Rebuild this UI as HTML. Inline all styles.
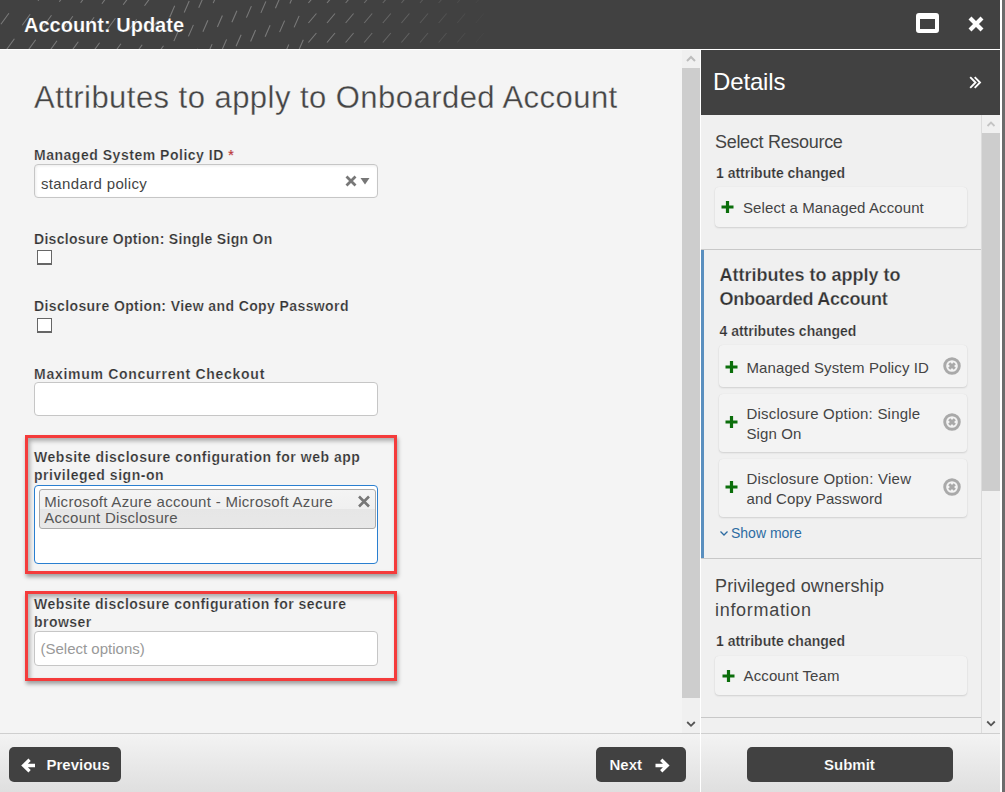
<!DOCTYPE html>
<html><head><meta charset="utf-8"><title>Account: Update</title>
<style>
*{box-sizing:border-box;margin:0;padding:0}
html,body{width:1005px;height:792px;overflow:hidden;background:#f4f4f4;font-family:"Liberation Sans",sans-serif;position:relative}
.a{position:absolute}
.t{position:absolute;white-space:nowrap;font-family:"Liberation Sans",sans-serif}
</style></head><body>
<div class="a" style="left:0px;top:0px;width:1000px;height:49px;background:#414141"></div>
<svg class="a" style="left:0;top:0" width="1000" height="49"><line x1="-4.6" y1="-1.2" x2="3.4" y2="-12.2" stroke="#8c8c8c" stroke-opacity="0.75" stroke-width="1.1"/><line x1="16.7" y1="-0.2" x2="24.7" y2="-11.2" stroke="#8c8c8c" stroke-opacity="0.75" stroke-width="1.1"/><line x1="38.0" y1="0.8" x2="46.0" y2="-10.2" stroke="#8c8c8c" stroke-opacity="0.75" stroke-width="1.1"/><line x1="59.3" y1="1.8" x2="67.3" y2="-9.2" stroke="#8c8c8c" stroke-opacity="0.75" stroke-width="1.1"/><line x1="80.6" y1="2.8" x2="88.6" y2="-8.2" stroke="#8c8c8c" stroke-opacity="0.75" stroke-width="1.1"/><line x1="101.9" y1="3.8" x2="109.9" y2="-7.2" stroke="#8c8c8c" stroke-opacity="0.75" stroke-width="1.1"/><line x1="123.2" y1="4.8" x2="131.2" y2="-6.2" stroke="#8c8c8c" stroke-opacity="0.75" stroke-width="1.1"/><line x1="144.5" y1="5.8" x2="152.5" y2="-5.2" stroke="#8c8c8c" stroke-opacity="0.75" stroke-width="1.1"/><line x1="0.9" y1="24.3" x2="8.9" y2="13.3" stroke="#8c8c8c" stroke-opacity="0.75" stroke-width="1.1"/><line x1="22.2" y1="25.3" x2="30.2" y2="14.3" stroke="#8c8c8c" stroke-opacity="0.75" stroke-width="1.1"/><line x1="43.5" y1="26.3" x2="51.5" y2="15.3" stroke="#8c8c8c" stroke-opacity="0.75" stroke-width="1.1"/><line x1="64.8" y1="27.3" x2="72.8" y2="16.3" stroke="#8c8c8c" stroke-opacity="0.75" stroke-width="1.1"/><line x1="86.1" y1="28.3" x2="94.1" y2="17.3" stroke="#8c8c8c" stroke-opacity="0.75" stroke-width="1.1"/><line x1="107.4" y1="29.3" x2="115.4" y2="18.3" stroke="#8c8c8c" stroke-opacity="0.75" stroke-width="1.1"/><line x1="128.7" y1="30.3" x2="136.7" y2="19.3" stroke="#8c8c8c" stroke-opacity="0.75" stroke-width="1.1"/><line x1="150.0" y1="31.3" x2="158.0" y2="20.3" stroke="#8c8c8c" stroke-opacity="0.75" stroke-width="1.1"/><line x1="-14.9" y1="48.8" x2="-6.9" y2="37.8" stroke="#8c8c8c" stroke-opacity="0.75" stroke-width="1.1"/><line x1="6.4" y1="49.8" x2="14.4" y2="38.8" stroke="#8c8c8c" stroke-opacity="0.75" stroke-width="1.1"/><line x1="27.7" y1="50.8" x2="35.7" y2="39.8" stroke="#8c8c8c" stroke-opacity="0.75" stroke-width="1.1"/><line x1="49.0" y1="51.8" x2="57.0" y2="40.8" stroke="#8c8c8c" stroke-opacity="0.75" stroke-width="1.1"/><line x1="70.3" y1="52.8" x2="78.3" y2="41.8" stroke="#8c8c8c" stroke-opacity="0.75" stroke-width="1.1"/><line x1="91.6" y1="53.8" x2="99.6" y2="42.8" stroke="#8c8c8c" stroke-opacity="0.75" stroke-width="1.1"/><line x1="112.9" y1="54.8" x2="120.9" y2="43.8" stroke="#8c8c8c" stroke-opacity="0.75" stroke-width="1.1"/><line x1="134.2" y1="55.8" x2="142.2" y2="44.8" stroke="#8c8c8c" stroke-opacity="0.75" stroke-width="1.1"/><line x1="155.5" y1="56.8" x2="163.5" y2="45.8" stroke="#8c8c8c" stroke-opacity="0.75" stroke-width="1.1"/><line x1="165.5" y1="-6.7" x2="170.5" y2="-18.2" stroke="#8c8c8c" stroke-opacity="0.75" stroke-width="1.1"/><line x1="180.0" y1="-11.4" x2="185.0" y2="-22.9" stroke="#8c8c8c" stroke-opacity="0.75" stroke-width="1.1"/><line x1="169.7" y1="17.2" x2="174.7" y2="5.7" stroke="#8c8c8c" stroke-opacity="0.75" stroke-width="1.1"/><line x1="184.2" y1="12.5" x2="189.2" y2="1.0" stroke="#8c8c8c" stroke-opacity="0.75" stroke-width="1.1"/><line x1="198.7" y1="7.8" x2="203.7" y2="-3.7" stroke="#8c8c8c" stroke-opacity="0.75" stroke-width="1.1"/><line x1="213.2" y1="3.1" x2="218.2" y2="-8.4" stroke="#8c8c8c" stroke-opacity="0.75" stroke-width="1.1"/><line x1="227.7" y1="-1.6" x2="232.7" y2="-13.1" stroke="#8c8c8c" stroke-opacity="0.75" stroke-width="1.1"/><line x1="242.2" y1="-6.3" x2="247.2" y2="-17.8" stroke="#8c8c8c" stroke-opacity="0.75" stroke-width="1.1"/><line x1="256.7" y1="-11.0" x2="261.7" y2="-22.5" stroke="#8c8c8c" stroke-opacity="0.75" stroke-width="1.1"/><line x1="173.9" y1="41.1" x2="178.9" y2="29.6" stroke="#8c8c8c" stroke-opacity="0.75" stroke-width="1.1"/><line x1="188.4" y1="36.4" x2="193.4" y2="24.9" stroke="#8c8c8c" stroke-opacity="0.75" stroke-width="1.1"/><line x1="202.9" y1="31.7" x2="207.9" y2="20.2" stroke="#8c8c8c" stroke-opacity="0.75" stroke-width="1.1"/><line x1="217.4" y1="27.0" x2="222.4" y2="15.5" stroke="#8c8c8c" stroke-opacity="0.75" stroke-width="1.1"/><line x1="231.9" y1="22.3" x2="236.9" y2="10.8" stroke="#8c8c8c" stroke-opacity="0.75" stroke-width="1.1"/><line x1="246.4" y1="17.6" x2="251.4" y2="6.1" stroke="#8c8c8c" stroke-opacity="0.75" stroke-width="1.1"/><line x1="260.9" y1="12.9" x2="265.9" y2="1.4" stroke="#8c8c8c" stroke-opacity="0.75" stroke-width="1.1"/><line x1="275.4" y1="8.2" x2="280.4" y2="-3.3" stroke="#8c8c8c" stroke-opacity="0.75" stroke-width="1.1"/><line x1="289.9" y1="3.5" x2="294.9" y2="-8.0" stroke="#8c8c8c" stroke-opacity="0.75" stroke-width="1.1"/><line x1="192.6" y1="60.3" x2="197.6" y2="48.8" stroke="#8c8c8c" stroke-opacity="0.75" stroke-width="1.1"/><line x1="207.1" y1="55.6" x2="212.1" y2="44.1" stroke="#8c8c8c" stroke-opacity="0.75" stroke-width="1.1"/><line x1="221.6" y1="50.9" x2="226.6" y2="39.4" stroke="#8c8c8c" stroke-opacity="0.75" stroke-width="1.1"/><line x1="236.1" y1="46.2" x2="241.1" y2="34.7" stroke="#8c8c8c" stroke-opacity="0.75" stroke-width="1.1"/><line x1="250.6" y1="41.5" x2="255.6" y2="30.0" stroke="#8c8c8c" stroke-opacity="0.75" stroke-width="1.1"/><line x1="265.1" y1="36.8" x2="270.1" y2="25.3" stroke="#8c8c8c" stroke-opacity="0.75" stroke-width="1.1"/><line x1="279.6" y1="32.1" x2="284.6" y2="20.6" stroke="#8c8c8c" stroke-opacity="0.75" stroke-width="1.1"/><line x1="294.1" y1="27.4" x2="299.1" y2="15.9" stroke="#8c8c8c" stroke-opacity="0.75" stroke-width="1.1"/><line x1="269.3" y1="60.7" x2="274.3" y2="49.2" stroke="#8c8c8c" stroke-opacity="0.75" stroke-width="1.1"/><line x1="283.8" y1="56.0" x2="288.8" y2="44.5" stroke="#8c8c8c" stroke-opacity="0.75" stroke-width="1.1"/><line x1="298.3" y1="51.3" x2="303.3" y2="39.8" stroke="#8c8c8c" stroke-opacity="0.75" stroke-width="1.1"/><line x1="308.4" y1="3.0" x2="316.4" y2="-6.5" stroke="#8c8c8c" stroke-opacity="0.75" stroke-width="1.1"/><line x1="327.0" y1="3.0" x2="335.0" y2="-6.5" stroke="#8c8c8c" stroke-opacity="0.75" stroke-width="1.1"/><line x1="345.6" y1="3.0" x2="353.6" y2="-6.5" stroke="#8c8c8c" stroke-opacity="0.68" stroke-width="1.1"/><line x1="364.2" y1="3.0" x2="372.2" y2="-6.5" stroke="#8c8c8c" stroke-opacity="0.59" stroke-width="1.1"/><line x1="382.8" y1="3.0" x2="390.8" y2="-6.5" stroke="#8c8c8c" stroke-opacity="0.50" stroke-width="1.1"/><line x1="401.4" y1="3.0" x2="409.4" y2="-6.5" stroke="#8c8c8c" stroke-opacity="0.42" stroke-width="1.1"/><line x1="420.0" y1="3.0" x2="428.0" y2="-6.5" stroke="#8c8c8c" stroke-opacity="0.33" stroke-width="1.1"/><line x1="438.6" y1="3.0" x2="446.6" y2="-6.5" stroke="#8c8c8c" stroke-opacity="0.24" stroke-width="1.1"/><line x1="457.2" y1="3.0" x2="465.2" y2="-6.5" stroke="#8c8c8c" stroke-opacity="0.15" stroke-width="1.1"/><line x1="475.8" y1="3.0" x2="483.8" y2="-6.5" stroke="#8c8c8c" stroke-opacity="0.07" stroke-width="1.1"/><line x1="308.4" y1="23.0" x2="316.4" y2="13.5" stroke="#8c8c8c" stroke-opacity="0.75" stroke-width="1.1"/><line x1="327.0" y1="23.0" x2="335.0" y2="13.5" stroke="#8c8c8c" stroke-opacity="0.75" stroke-width="1.1"/><line x1="345.6" y1="23.0" x2="353.6" y2="13.5" stroke="#8c8c8c" stroke-opacity="0.68" stroke-width="1.1"/><line x1="364.2" y1="23.0" x2="372.2" y2="13.5" stroke="#8c8c8c" stroke-opacity="0.59" stroke-width="1.1"/><line x1="382.8" y1="23.0" x2="390.8" y2="13.5" stroke="#8c8c8c" stroke-opacity="0.50" stroke-width="1.1"/><line x1="401.4" y1="23.0" x2="409.4" y2="13.5" stroke="#8c8c8c" stroke-opacity="0.42" stroke-width="1.1"/><line x1="420.0" y1="23.0" x2="428.0" y2="13.5" stroke="#8c8c8c" stroke-opacity="0.33" stroke-width="1.1"/><line x1="438.6" y1="23.0" x2="446.6" y2="13.5" stroke="#8c8c8c" stroke-opacity="0.24" stroke-width="1.1"/><line x1="457.2" y1="23.0" x2="465.2" y2="13.5" stroke="#8c8c8c" stroke-opacity="0.15" stroke-width="1.1"/><line x1="475.8" y1="23.0" x2="483.8" y2="13.5" stroke="#8c8c8c" stroke-opacity="0.07" stroke-width="1.1"/><line x1="308.4" y1="42.5" x2="316.4" y2="33.0" stroke="#8c8c8c" stroke-opacity="0.75" stroke-width="1.1"/><line x1="327.0" y1="42.5" x2="335.0" y2="33.0" stroke="#8c8c8c" stroke-opacity="0.75" stroke-width="1.1"/><line x1="345.6" y1="42.5" x2="353.6" y2="33.0" stroke="#8c8c8c" stroke-opacity="0.68" stroke-width="1.1"/><line x1="364.2" y1="42.5" x2="372.2" y2="33.0" stroke="#8c8c8c" stroke-opacity="0.59" stroke-width="1.1"/><line x1="382.8" y1="42.5" x2="390.8" y2="33.0" stroke="#8c8c8c" stroke-opacity="0.50" stroke-width="1.1"/><line x1="401.4" y1="42.5" x2="409.4" y2="33.0" stroke="#8c8c8c" stroke-opacity="0.42" stroke-width="1.1"/><line x1="420.0" y1="42.5" x2="428.0" y2="33.0" stroke="#8c8c8c" stroke-opacity="0.33" stroke-width="1.1"/><line x1="438.6" y1="42.5" x2="446.6" y2="33.0" stroke="#8c8c8c" stroke-opacity="0.24" stroke-width="1.1"/><line x1="457.2" y1="42.5" x2="465.2" y2="33.0" stroke="#8c8c8c" stroke-opacity="0.15" stroke-width="1.1"/><line x1="475.8" y1="42.5" x2="483.8" y2="33.0" stroke="#8c8c8c" stroke-opacity="0.07" stroke-width="1.1"/></svg>
<div class="a" style="left:0px;top:49px;width:1001px;height:1px;background:#fff"></div>
<div class="a" style="left:1000px;top:0px;width:2px;height:792px;background:#fff"></div>
<div class="a" style="left:1002px;top:0px;width:3px;height:792px;background:#6c6c6c"></div>
<div class="t" style="left:24px;top:15.07px;font-size:20px;line-height:20px;font-weight:700;color:#fff;-webkit-text-stroke:0.2px #414141;">Account: Update</div>
<div class="a" style="left:916px;top:13px;width:23px;height:20px;border:solid #fff;border-width:6px 4px 4px 4px;border-radius:3px"></div>
<svg class="a" style="left:966px;top:14px" width="20" height="20" viewBox="0 0 20 20"><path d="M4 4 L16 16 M16 4 L4 16" stroke="#fff" stroke-width="4.2" stroke-linecap="butt"/></svg>
<div class="a" style="left:0px;top:50px;width:682px;height:683px;background:#f4f4f4"></div>
<div class="a" style="left:682px;top:50px;width:18px;height:683px;background:#f0f0f0"></div>
<div class="a" style="left:682px;top:68px;width:18px;height:630px;background:#cdcdcd"></div>
<svg class="a" style="left:682px;top:50px" width="18" height="18"><path d="M5 11 L9 7 L13 11" fill="none" stroke="#bdbdbd" stroke-width="2"/></svg>
<svg class="a" style="left:682px;top:715px" width="18" height="18"><path d="M5.2 7 L9 10.8 L12.8 7" fill="none" stroke="#555" stroke-width="1.8"/></svg>
<div class="a" style="left:700px;top:50px;width:1px;height:742px;background:#fff"></div>
<div class="t" style="left:34px;top:81.75px;font-size:31px;line-height:31px;font-weight:400;color:#444;letter-spacing:0.46px;-webkit-text-stroke:0.3px #f4f4f4;">Attributes to apply to Onboarded Account</div>
<div class="t" style="left:34px;top:148.15px;font-size:14px;line-height:14px;font-weight:700;color:#333;letter-spacing:0.52px;-webkit-text-stroke:0.2px #f4f4f4;">Managed System Policy ID <span style="color:#b83232">*</span></div>
<div class="a" style="left:34px;top:164px;width:344px;height:34px;background:#fff;border:1px solid #c6c6c6;border-radius:4px;box-shadow:inset 1px 1px 3px rgba(0,0,0,.08)"></div>
<div class="t" style="left:41px;top:175.60px;font-size:15px;line-height:15px;font-weight:400;color:#444;letter-spacing:0.35px;">standard policy</div>
<svg class="a" style="left:344px;top:174px" width="30" height="14"><path d="M2.5 2.5 L11.5 11.5 M11.5 2.5 L2.5 11.5" stroke="#777" stroke-width="2.8"/><path d="M16.5 4 L25.5 4 L21 10.5 Z" fill="#777"/></svg>
<div class="t" style="left:34px;top:232.15px;font-size:14px;line-height:14px;font-weight:700;color:#333;letter-spacing:0.3px;-webkit-text-stroke:0.2px #f4f4f4;">Disclosure Option: Single Sign On</div>
<div class="a" style="left:37px;top:250px;width:15px;height:15px;background:#fff;border:1px solid #666;border-bottom-width:2px"></div>
<div class="t" style="left:34px;top:299.15px;font-size:14px;line-height:14px;font-weight:700;color:#333;letter-spacing:0.4px;-webkit-text-stroke:0.2px #f4f4f4;">Disclosure Option: View and Copy Password</div>
<div class="a" style="left:37px;top:318px;width:15px;height:15px;background:#fff;border:1px solid #666;border-bottom-width:2px"></div>
<div class="t" style="left:34px;top:367.15px;font-size:14px;line-height:14px;font-weight:700;color:#333;letter-spacing:0.72px;-webkit-text-stroke:0.2px #f4f4f4;">Maximum Concurrent Checkout</div>
<div class="a" style="left:34px;top:382px;width:344px;height:34px;background:#fff;border:1px solid #c6c6c6;border-radius:4px"></div>
<div class="a" style="left:25px;top:435px;width:372px;height:139px;border:3px solid #f43b3b;box-shadow:1px 3px 4px rgba(0,0,0,.35), inset 2px 3px 4px rgba(0,0,0,.3)"></div>
<div class="t" style="left:34px;top:447.90px;font-size:14px;line-height:18.5px;font-weight:700;color:#333;letter-spacing:0.53px;-webkit-text-stroke:0.2px #f4f4f4;">Website disclosure configuration for web app<br>privileged sign-on</div>
<div class="a" style="left:34px;top:485px;width:344px;height:79px;background:#fff;border:1px solid #2a7fd0;border-radius:4px"></div>
<div class="a" style="left:39px;top:489px;width:337px;height:40px;background:linear-gradient(#f4f4f4,#f0f0f0 50%,#e6e6e6 50%,#e8e8e8);border:1px solid #aaa;border-radius:3px"></div>
<div class="t" style="left:44.2px;top:493.80px;font-size:15px;line-height:16px;font-weight:400;color:#555;letter-spacing:0.3px;">Microsoft Azure account - Microsoft Azure<br>Account Disclosure</div>
<svg class="a" style="left:357px;top:495px" width="14" height="13"><path d="M2 1.5 L12 11.5 M12 1.5 L2 11.5" stroke="#777" stroke-width="2.6"/></svg>
<div class="a" style="left:25px;top:591px;width:372px;height:90px;border:3px solid #f43b3b;box-shadow:1px 3px 4px rgba(0,0,0,.35), inset 2px 3px 4px rgba(0,0,0,.3)"></div>
<div class="t" style="left:34px;top:595.15px;font-size:14px;line-height:18px;font-weight:700;color:#333;letter-spacing:0.47px;-webkit-text-stroke:0.2px #f4f4f4;">Website disclosure configuration for secure<br>browser</div>
<div class="a" style="left:34px;top:631px;width:344px;height:35px;background:#fff;border:1px solid #c6c6c6;border-radius:4px"></div>
<div class="t" style="left:40.5px;top:641.00px;font-size:15px;line-height:15px;font-weight:400;color:#999;">(Select options)</div>
<div class="a" style="left:701px;top:50px;width:299px;height:65px;background:#414141"></div>
<div class="t" style="left:713px;top:70.48px;font-size:24px;line-height:24px;font-weight:400;color:#fff;letter-spacing:-0.15px;">Details</div>
<svg class="a" style="left:968px;top:75px" width="16" height="15"><path d="M2.2 2.2 L7.5 7.5 L2.2 12.8 M6.7 2.2 L12 7.5 L6.7 12.8" fill="none" stroke="#fff" stroke-width="1.9"/></svg>
<div class="a" style="left:701px;top:115px;width:280px;height:618px;background:#f0f0f0"></div>
<div class="a" style="left:981px;top:115px;width:19px;height:618px;background:#f0f0f0;border-left:1px solid #dcdcdc"></div>
<div class="a" style="left:982px;top:133px;width:18px;height:358px;background:#cdcdcd"></div>
<svg class="a" style="left:982px;top:115px" width="18" height="18"><path d="M5.5 11 L9 7.5 L12.5 11" fill="none" stroke="#c4c4c4" stroke-width="1.8"/></svg>
<svg class="a" style="left:982px;top:715px" width="18" height="18"><path d="M5.2 6.5 L9 10.3 L12.8 6.5" fill="none" stroke="#555" stroke-width="1.8"/></svg>
<div class="t" style="left:715px;top:132.96px;font-size:18px;line-height:18px;font-weight:400;color:#444;letter-spacing:-0.3px;">Select Resource</div>
<div class="t" style="left:716px;top:165.85px;font-size:14px;line-height:14px;font-weight:700;color:#333;-webkit-text-stroke:0.2px #f0f0f0;">1 attribute changed</div>
<div class="a" style="left:715px;top:187px;width:252px;height:40px;background:#f3f3f3;border-radius:4px;box-shadow:0 1px 2px rgba(0,0,0,.13), 0 0 1px rgba(0,0,0,.08)"></div>
<svg class="a" style="left:721px;top:201px" width="13" height="12"><path d="M6.5 0 V12 M0.5 6 H12.5" stroke="#0b6e0b" stroke-width="3.2"/></svg>
<div class="t" style="left:743px;top:200.00px;font-size:15px;line-height:15px;font-weight:400;color:#444;letter-spacing:0.1px;">Select a Managed Account</div>
<div class="a" style="left:701px;top:249px;width:280px;height:1px;background:#c8c8c8"></div>
<div class="a" style="left:701px;top:250px;width:3px;height:308px;background:#5a8fbf"></div>
<div class="t" style="left:719.5px;top:263.16px;font-size:18px;line-height:24px;font-weight:700;color:#333;-webkit-text-stroke:0.25px #f0f0f0;">Attributes to apply to<br><span style="letter-spacing:-0.25px">Onboarded Account</span></div>
<div class="t" style="left:719.5px;top:324.15px;font-size:14px;line-height:14px;font-weight:700;color:#333;-webkit-text-stroke:0.2px #f0f0f0;">4 attributes changed</div>
<div class="a" style="left:719px;top:345px;width:248px;height:42px;background:#f3f3f3;border-radius:4px;box-shadow:0 1px 2px rgba(0,0,0,.13), 0 0 1px rgba(0,0,0,.08)"></div>
<svg class="a" style="left:725px;top:361px" width="13" height="12"><path d="M6.5 0 V12 M0.5 6 H12.5" stroke="#0b6e0b" stroke-width="3.2"/></svg>
<svg class="a" style="left:943px;top:357px" width="18" height="18"><circle cx="9" cy="9" r="7.3" fill="none" stroke="#a9a9a9" stroke-width="2.9"/><path d="M6.2 6.2 L11.8 11.8 M11.8 6.2 L6.2 11.8" stroke="#a9a9a9" stroke-width="3"/></svg>
<div class="t" style="left:746.5px;top:360.10px;font-size:15px;line-height:15px;font-weight:400;color:#444;letter-spacing:0.1px;">Managed System Policy ID</div>
<div class="a" style="left:719px;top:394px;width:248px;height:58px;background:#f3f3f3;border-radius:4px;box-shadow:0 1px 2px rgba(0,0,0,.13), 0 0 1px rgba(0,0,0,.08)"></div>
<svg class="a" style="left:725px;top:416px" width="13" height="12"><path d="M6.5 0 V12 M0.5 6 H12.5" stroke="#0b6e0b" stroke-width="3.2"/></svg>
<svg class="a" style="left:943px;top:413px" width="18" height="18"><circle cx="9" cy="9" r="7.3" fill="none" stroke="#a9a9a9" stroke-width="2.9"/><path d="M6.2 6.2 L11.8 11.8 M11.8 6.2 L6.2 11.8" stroke="#a9a9a9" stroke-width="3"/></svg>
<div class="t" style="left:746.5px;top:404.00px;font-size:15px;line-height:20px;font-weight:400;color:#444;letter-spacing:0.1px;"><span style="letter-spacing:0.22px">Disclosure Option: Single</span><br>Sign On</div>
<div class="a" style="left:719px;top:459px;width:248px;height:58px;background:#f3f3f3;border-radius:4px;box-shadow:0 1px 2px rgba(0,0,0,.13), 0 0 1px rgba(0,0,0,.08)"></div>
<svg class="a" style="left:725px;top:481px" width="13" height="12"><path d="M6.5 0 V12 M0.5 6 H12.5" stroke="#0b6e0b" stroke-width="3.2"/></svg>
<svg class="a" style="left:943px;top:478px" width="18" height="18"><circle cx="9" cy="9" r="7.3" fill="none" stroke="#a9a9a9" stroke-width="2.9"/><path d="M6.2 6.2 L11.8 11.8 M11.8 6.2 L6.2 11.8" stroke="#a9a9a9" stroke-width="3"/></svg>
<div class="t" style="left:746.5px;top:469.20px;font-size:15px;line-height:20px;font-weight:400;color:#444;letter-spacing:0.1px;"><span style="letter-spacing:0.25px">Disclosure Option: View</span><br>and Copy Password</div>
<svg class="a" style="left:719px;top:529px" width="10" height="10"><path d="M1.5 2.5 L5 6 L8.5 2.5" fill="none" stroke="#2d6ca2" stroke-width="1.3"/></svg>
<div class="t" style="left:731px;top:526.15px;font-size:14px;line-height:14px;font-weight:400;color:#2d6ca2;">Show more</div>
<div class="a" style="left:701px;top:558px;width:280px;height:1px;background:#c8c8c8"></div>
<div class="t" style="left:715px;top:573.56px;font-size:18px;line-height:24px;font-weight:400;color:#444;"><span style="letter-spacing:0.15px">Privileged ownership</span><br><span style="letter-spacing:0.7px">information</span></div>
<div class="t" style="left:716px;top:634.15px;font-size:14px;line-height:14px;font-weight:700;color:#333;-webkit-text-stroke:0.2px #f0f0f0;">1 attribute changed</div>
<div class="a" style="left:715px;top:656px;width:252px;height:39px;background:#f3f3f3;border-radius:4px;box-shadow:0 1px 2px rgba(0,0,0,.13), 0 0 1px rgba(0,0,0,.08)"></div>
<svg class="a" style="left:721.5px;top:670px" width="13" height="12"><path d="M6.5 0 V12 M0.5 6 H12.5" stroke="#0b6e0b" stroke-width="3.2"/></svg>
<div class="t" style="left:743.6px;top:668.30px;font-size:15px;line-height:15px;font-weight:400;color:#444;letter-spacing:0.1px;">Account Team</div>
<div class="a" style="left:701px;top:717px;width:280px;height:1px;background:#c8c8c8"></div>
<div class="a" style="left:0px;top:733px;width:700px;height:1px;background:#cfcfcf"></div>
<div class="a" style="left:701px;top:733px;width:299px;height:1px;background:#cfcfcf"></div>
<div class="a" style="left:0px;top:734px;width:700px;height:58px;background:linear-gradient(#f3f3f3,#dfdfdf)"></div>
<div class="a" style="left:701px;top:734px;width:299px;height:58px;background:linear-gradient(#f3f3f3,#dfdfdf)"></div>
<div class="a" style="left:9px;top:747px;width:112px;height:35px;background:#414141;border-radius:5px"></div>
<svg class="a" style="left:21px;top:758px" width="15" height="15"><path d="M14 7.5 H4 M8.6 1.8 L2.6 7.5 L8.6 13.2" fill="none" stroke="#fff" stroke-width="3.3" stroke-linejoin="miter"/></svg>
<div class="t" style="left:46.5px;top:757.00px;font-size:15px;line-height:15px;font-weight:700;color:#fff;-webkit-text-stroke:0.15px #414141;">Previous</div>
<div class="a" style="left:596px;top:747px;width:90px;height:35px;background:#414141;border-radius:5px"></div>
<div class="t" style="left:609.5px;top:757.00px;font-size:15px;line-height:15px;font-weight:700;color:#fff;-webkit-text-stroke:0.15px #414141;">Next</div>
<svg class="a" style="left:655px;top:758px" width="15" height="15"><path d="M0.5 7.5 H10.5 M6.2 1.8 L12.2 7.5 L6.2 13.2" fill="none" stroke="#fff" stroke-width="3.3" stroke-linejoin="miter"/></svg>
<div class="a" style="left:747px;top:747px;width:206px;height:35px;background:#414141;border-radius:5px"></div>
<div class="t" style="left:824px;top:757.30px;font-size:15px;line-height:15px;font-weight:700;color:#fff;-webkit-text-stroke:0.15px #414141;">Submit</div>
</body></html>
